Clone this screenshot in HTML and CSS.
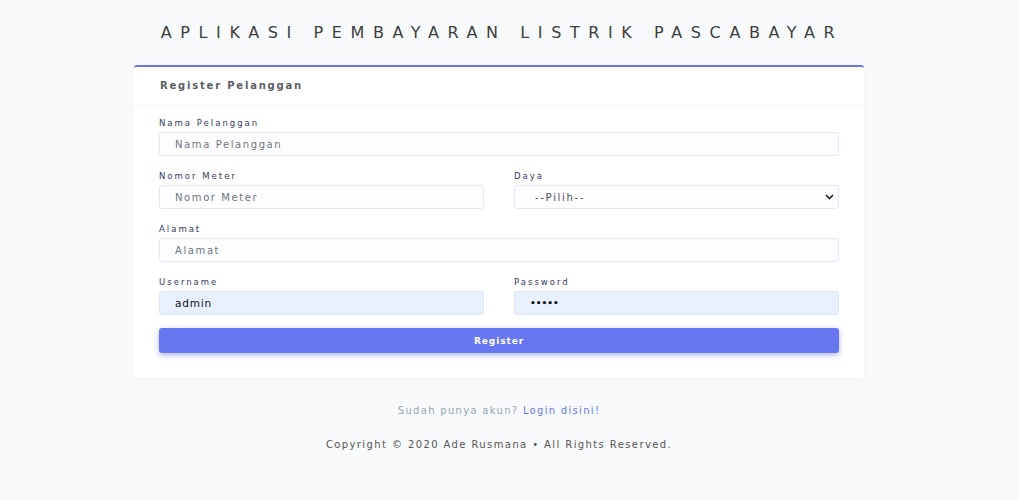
FILE: index.html
```html
<!DOCTYPE html>
<html>
<head>
<meta charset="utf-8">
<link rel="stylesheet" href="styles.css">
</head>
<body>
<div class="wrap">
  <h1 class="title">APLIKASI PEMBAYARAN LISTRIK PASCABAYAR</h1>
  <div class="card">
    <div class="card-header">Register Pelanggan</div>
    <div class="card-body">
      <div class="field">
        <label>Nama Pelanggan</label>
        <div class="input placeholder">Nama Pelanggan</div>
      </div>
      <div class="row">
        <div class="field">
          <label>Nomor Meter</label>
          <div class="input placeholder">Nomor Meter</div>
        </div>
        <div class="field">
          <label>Daya</label>
          <div class="input select"><span>--Pilih--</span>
            <svg class="chev" width="9" height="6" viewBox="0 0 9 6"><path d="M1 1l3.5 3.5L8 1" fill="none" stroke="#222" stroke-width="1.6"/></svg>
          </div>
        </div>
      </div>
      <div class="field">
        <label>Alamat</label>
        <div class="input placeholder">Alamat</div>
      </div>
      <div class="row">
        <div class="field">
          <label>Username</label>
          <div class="input filled">admin</div>
        </div>
        <div class="field">
          <label>Password</label>
          <div class="input filled dots">•••••</div>
        </div>
      </div>
      <div class="btn">Register</div>
    </div>
  </div>
  <p class="login">Sudah punya akun? <a>Login disini!</a></p>
  <p class="copy">Copyright © 2020 Ade Rusmana • All Rights Reserved.</p>
</div>
</body>
</html>
```
FILE: styles.css
```css
* { box-sizing: border-box; }
body {
  margin: 0;
  background: #f8fafb;
  font-family: "DejaVu Sans", Verdana, sans-serif;
  color: #34395e;
}
.wrap {
  width: 730px;
  margin: 0 0 0 134px;
  padding-top: 23px;
}
.title {
  margin: 0 0 22px;
  text-align: center;
  font-weight: 400;
  font-size: 16px;
  letter-spacing: 8.6px;
  padding-left: 6px;
  color: #3d3d3d;
  line-height: 20px;
}
.card {
  background: #fff;
  border-top: 2px solid #6777ef;
  border-radius: 3px;
  box-shadow: 0 3px 8px rgba(0,0,0,0.03);
}
.card-header {
  height: 38px;
  padding: 0 26px;
  display: flex;
  align-items: center;
  font-size: 10px;
  font-weight: 700;
  letter-spacing: 1.8px;
  color: #5a5f66;
  border-bottom: 1px solid #f7f8fa;
}
.card-body {
  padding: 12px 25px 25px;
}
.row {
  display: grid;
  grid-template-columns: 1fr 1fr;
  column-gap: 30px;
}
.field {
  margin-bottom: 14px;
}
label {
  display: block;
  font-size: 8.5px;
  letter-spacing: 2px;
  color: #34395e;
  line-height: 12px;
  margin-bottom: 3px;
}
.input {
  height: 24px;
  border: 1px solid #e4e6fc;
  border-radius: 3px;
  background: #fdfdff;
  padding: 0 15px;
  display: flex;
  align-items: center;
  font-size: 10px;
  letter-spacing: 1.6px;
  color: #495057;
}
.placeholder { color: #6c757d; }
.select { justify-content: space-between; padding-right: 4px; padding-left: 20px; letter-spacing: 1.7px; }
.filled {
  background: #e8f0fe;
  border-color: #dde6f8;
  color: #111;
  font-size: 10.5px;
  letter-spacing: 0.8px;
}
.dots { font-size: 9px; letter-spacing: 0; font-weight: 700; }
.btn {
  margin-top: -1px;
  height: 25px;
  border-radius: 3px;
  background: #6777ef;
  color: #fff;
  font-size: 9px;
  font-weight: 700;
  letter-spacing: 0.9px;
  display: flex;
  align-items: center;
  justify-content: center;
  box-shadow: 0 2px 6px #acb5f6;
}
.login {
  text-align: center;
  margin: 27px 0 0;
  font-size: 10px;
  color: #98a6ad;
  letter-spacing: 1.3px;
}
.login a { color: #6777ef; }
.copy {
  text-align: center;
  margin: 23px 0 0;
  font-size: 10px;
  color: #555;
  letter-spacing: 1.4px;
}
```
